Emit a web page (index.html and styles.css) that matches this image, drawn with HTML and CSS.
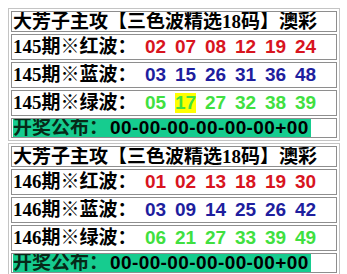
FILE: index.html
```html
<!DOCTYPE html>
<html>
<head>
<meta charset="utf-8">
<link rel="stylesheet" href="styles.css">
</head>
<body>
<div class="board">
  <div class="cell head">大芳子主攻【三色波精选18码】澳彩</div>
  <div class="cell row"><span class="label">145期※红波：</span><span class="nums red"><span>02</span><span>07</span><span>08</span><span>12</span><span>19</span><span>24</span></span></div>
  <div class="cell row"><span class="label">145期※蓝波：</span><span class="nums blue"><span>03</span><span>15</span><span>26</span><span>31</span><span>36</span><span>48</span></span></div>
  <div class="cell row"><span class="label">145期※绿波：</span><span class="nums green"><span>05</span><span class="hit">17</span><span>27</span><span>32</span><span>38</span><span>39</span></span></div>
  <div class="cell foot"><span class="result">开奖公布：<span class="code">00-00-00-00-00-00+00</span></span></div>
</div>
<div class="board">
  <div class="cell head">大芳子主攻【三色波精选18码】澳彩</div>
  <div class="cell row"><span class="label">146期※红波：</span><span class="nums red"><span>01</span><span>02</span><span>13</span><span>18</span><span>19</span><span>30</span></span></div>
  <div class="cell row"><span class="label">146期※蓝波：</span><span class="nums blue"><span>03</span><span>09</span><span>14</span><span>25</span><span>26</span><span>42</span></span></div>
  <div class="cell row"><span class="label">146期※绿波：</span><span class="nums green"><span>06</span><span>21</span><span>27</span><span>33</span><span>39</span><span>49</span></span></div>
  <div class="cell foot"><span class="result">开奖公布：<span class="code">00-00-00-00-00-00+00</span></span></div>
</div>
</body>
</html>
```
FILE: styles.css
```css
html, body {
  margin: 0;
  background: #fff;
}
body {
  padding: 8px 0 0 8px;
  font-family: "Liberation Serif", "Noto Sans CJK SC", serif;
  font-weight: bold;
  font-size: 19px;
  color: #000;
}
.board {
  width: 332px;
  box-sizing: border-box;
  border: 1px solid #c4c4c4;
  padding: 2px;
  display: flex;
  flex-direction: column;
  gap: 2px;
  margin-bottom: 2px;
}
.cell {
  border: 1px solid #8e8e8e;
  padding: 0 1px;
  display: flex;
  align-items: center;
  white-space: nowrap;
  overflow: hidden;
}
.head {
  height: 19px;
  line-height: 19px;
}
.row {
  height: 24px;
  line-height: 24px;
}
.foot {
  height: 18px;
  line-height: 18px;
  align-items: stretch;
}
.label {
  display: inline-block;
  width: 132px;
}
.nums {
  display: flex;
  gap: 9px;
  font-family: "Liberation Sans", sans-serif;
  font-weight: bold;
}
.nums span {
  width: 21px;
  display: inline-block;
  line-height: 20px;
}
.red { color: #d8141e; }
.blue { color: #1e1e9e; }
.green { color: #40e040; }
.nums .hit {
  background: #ffff00;
}
.result {
  background: #16cc8f;
  color: #062a18;
  line-height: 18px;
  padding-right: 2px;
}
.code {
  font-family: "Liberation Sans", sans-serif;
  letter-spacing: 0.4px;
  margin-left: 2px;
  color: #000;
}
```
